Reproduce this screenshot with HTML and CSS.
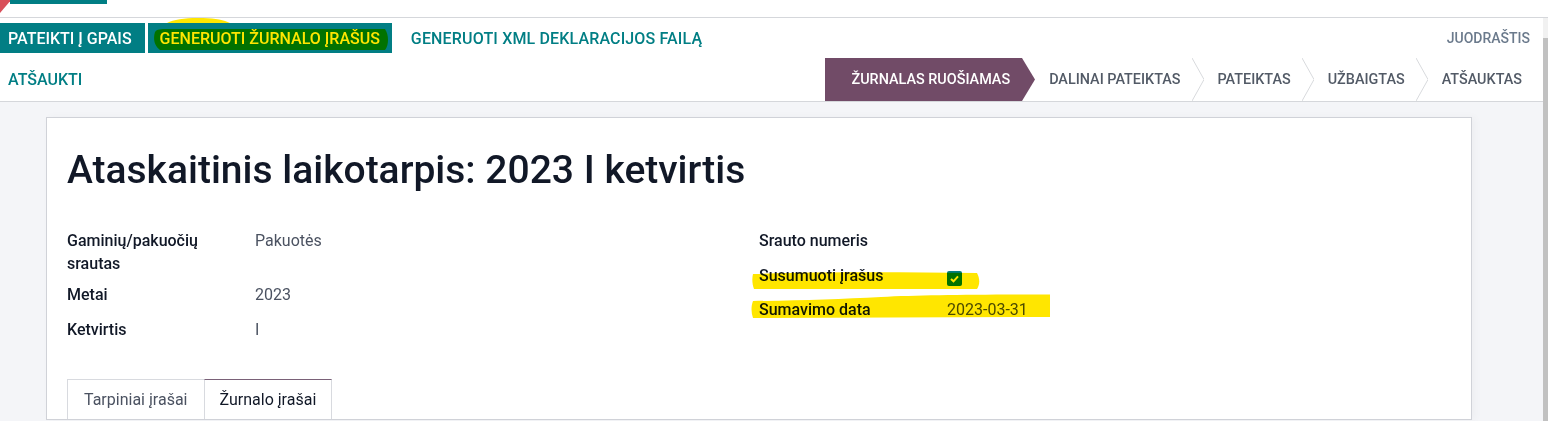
FILE: index.html
```html
<!DOCTYPE html>
<html lang="lt">
<head>
<meta charset="utf-8">
<title>Ataskaitinis laikotarpis</title>
<link rel="stylesheet" href="styles.css">
</head>
<body>
<div class="topstrip">
  <svg class="corner" width="10" height="13" viewBox="0 0 10 13"><polygon points="0,0 11,0 0,13" fill="#d9505a"/></svg>
  <div class="topbar"></div>
</div>
<div class="layout">
  <div class="main">
    <div class="cp">
      <div class="cp-row1">
        <div class="btns">
          <button class="btn primary first">PATEIKTI Į GPAIS</button>
          <button class="btn primary marked">GENERUOTI ŽURNALO ĮRAŠUS
            <svg class="marker marker-btn" width="248" height="40" viewBox="0 0 248 40"><path d="M19,8 C26,4 40,2.5 55,3 C68,3.5 76,5 82,8 Z"/><path d="M7,17 C9,14 12,14 20,14 L237,14 C241,20 241,30 237,35 L12,35 C6,31 5,23 7,17 Z"/></svg>
          </button>
          <button class="btn link xml">GENERUOTI XML DEKLARACIJOS FAILĄ</button>
        </div>
        <div class="state-muted">JUODRAŠTIS</div>
      </div>
      <div class="cp-row2">
        <button class="btn link first">ATŠAUKTI</button>
        <div class="statusbar">
          <div class="st active">ŽURNALAS RUOŠIAMAS</div>
          <svg class="arrow" width="13" height="43" viewBox="0 0 13 43"><polygon points="0,0 13,21.5 0,43" fill="#714b67"/></svg>
          <div class="st">DALINAI PATEIKTAS</div>
          <svg class="chev" width="12" height="43" viewBox="0 0 12 43"><polyline points="0,0 12,21.5 0,43" /></svg>
          <div class="st">PATEIKTAS</div>
          <svg class="chev" width="12" height="43" viewBox="0 0 12 43"><polyline points="0,0 12,21.5 0,43" /></svg>
          <div class="st">UŽBAIGTAS</div>
          <svg class="chev" width="12" height="43" viewBox="0 0 12 43"><polyline points="0,0 12,21.5 0,43" /></svg>
          <div class="st last">ATŠAUKTAS</div>
        </div>
      </div>
    </div>
    <div class="content">
      <div class="sheet">
        <h1 class="title">Ataskaitinis laikotarpis: 2023 I ketvirtis</h1>
        <div class="groups">
          <div class="group">
            <div class="row"><div class="label">Gaminių/pakuočių srautas</div><div class="value">Pakuotės</div></div>
            <div class="row"><div class="label">Metai</div><div class="value">2023</div></div>
            <div class="row"><div class="label">Ketvirtis</div><div class="value">I</div></div>
          </div>
          <div class="group">
            <div class="row"><div class="label">Srauto numeris</div><div class="value"></div></div>
            <div class="row marked">
              <div class="label">Susumuoti įrašus</div>
              <div class="value"><span class="check"><svg width="9" height="8" viewBox="0 0 9 8"><path d="M1,4 L3.5,6.3 L8,1.3" fill="none" stroke="#fff" stroke-width="2"/></svg></span></div>
              <svg class="marker marker-row1" width="240" height="34" viewBox="0 0 240 34"><path d="M2,14 C60,12 140,12 226,13 C229,19 229,24 226,29 L3,29 C1,24 1,18 2,14 Z"/></svg>
            </div>
            <div class="row marked">
              <div class="label">Sumavimo data</div>
              <div class="value">2023-03-31</div>
              <svg class="marker marker-row2" width="305" height="32" viewBox="0 0 305 32"><path d="M2,10 C50,9.5 90,8 130,6 C170,4 220,3.5 299,3.5 L299,26 L2,27 C0,21 0,15 2,10 Z"/></svg>
            </div>
          </div>
        </div>
        <div class="tabs">
          <div class="tab">Tarpiniai įrašai</div>
          <div class="tab active">Žurnalo įrašai</div>
        </div>
      </div>
    </div>
  </div>
  <div class="scroll"><div class="thumb"></div></div>
</div>
</body>
</html>
```
FILE: styles.css
```css
* { box-sizing: border-box; }
html, body { margin: 0; padding: 0; }
body {
  width: 1548px;
  height: 421px;
  overflow: hidden;
  background: #fff;
  font-family: Roboto, "Noto Sans", "Liberation Sans", sans-serif;
  color: #111827;
}
.topstrip {
  height: 18px;
  border-bottom: 1px solid #d5d7db;
  display: flex;
  align-items: flex-start;
}
.corner { display: block; flex: none; }
.topbar { width: 97px; height: 4px; background: #017e84; }

.layout { display: flex; height: 403px; }
.main {
  flex: 1;
  min-width: 0;
  display: flex;
  flex-direction: column;
  background: #f4f5f8;
}
.scroll {
  width: 5px;
  flex: none;
  background: #f1f1f1;
  padding-top: 20px;
  display: flex;
  flex-direction: column;
}
.thumb { flex: 1; background: #c1c1c1; }

.cp {
  background: #fff;
  border-bottom: 1px solid #d5d7db;
  padding: 5px 13px 0 0;
}
.cp-row1 {
  display: flex;
  justify-content: space-between;
  align-items: center;
  height: 30px;
}
.btns { display: flex; gap: 3px; }
.btn {
  font-family: Roboto, "Noto Sans", sans-serif;
  font-weight: 500;
  font-size: 16px;
  height: 30px;
  padding: 0 12px;
  border: 0;
  background: none;
  color: #017e84;
  display: inline-flex;
  align-items: center;
  white-space: nowrap;
  position: relative;
}
.btn.primary { background: #017e84; color: #fff; }
.btn.first { padding-left: 8px; padding-right: 13px; }
.btn.xml { padding-left: 16px; letter-spacing: 0.15px; }
.state-muted {
  font-size: 14px;
  font-weight: 500;
  color: #6b7a8c;
}
.marker {
  position: absolute;
  mix-blend-mode: multiply;
  fill: #ffe600;
  overflow: visible;
  pointer-events: none;
}
.marker-btn { left: 0; top: -8px; }

.cp-row2 {
  display: flex;
  justify-content: space-between;
  align-items: center;
  height: 43px;
  margin-top: 5px;
}
.statusbar { display: flex; height: 43px; align-items: stretch; }
.st {
  display: flex;
  align-items: center;
  padding: 0 11px 0 14px;
  font-size: 14.4px;
  font-weight: 500;
  color: #525a66;
  white-space: nowrap;
}
.st.active {
  background: #714b67;
  color: #fff;
  padding: 0 12px 0 27px;
}
.st.last { padding-right: 8px; }
.arrow, .chev { display: block; flex: none; }
.chev polyline { fill: none; stroke: #d8dadd; stroke-width: 1; }

.content { padding: 15px 71px 0 46px; flex: 1; }
.sheet {
  background: #fff;
  border: 1px solid #d0d2d8;
  padding: 28px 20px 0 20px;
  box-shadow: 3px 0 8px rgba(0,0,0,0.03);
}
.title {
  margin: 0;
  font-size: 39px;
  line-height: 48px;
  font-weight: 500;
  color: #111827;
}
.groups { display: flex; margin-top: 31.5px; }
.group { width: 50%; }
.row {
  display: grid;
  grid-template-columns: 188px 1fr;
  padding: 4.5px 0;
  min-height: 34.6px;
  line-height: 22.6px;
  font-size: 16px;
  position: relative;
}
.label { font-weight: 500; color: #111827; padding-right: 20px; }
.value { color: #4b5261; }
.check {
  display: inline-flex;
  align-items: center;
  justify-content: center;
  width: 15px;
  height: 15px;
  border-radius: 2px;
  background: #017e84;
  vertical-align: -2px;
}
.check svg { display: block; }
.marker-row1 { left: -8px; top: 0; }
.marker-row2 { left: -8px; top: -4px; }

.tabs { display: flex; margin-top: 30px; height: 40px; }
.tab {
  display: flex;
  align-items: center;
  padding: 0 16px;
  border: 1px solid #d8dadf;
  border-bottom: 0;
  font-size: 16px;
  color: #4b5261;
}
.tab.active {
  margin-left: -1px;
  padding: 0 15px;
  color: #111827;
  border-top-color: #7a6178;
}
```
